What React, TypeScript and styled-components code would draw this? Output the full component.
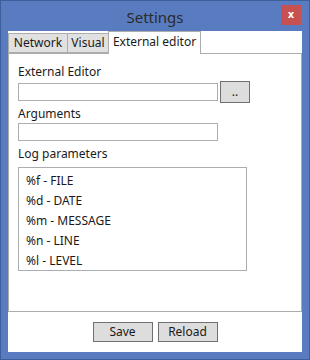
import React from "react";
import styled, { createGlobalStyle } from "styled-components";

const Global = createGlobalStyle`
  html, body { margin: 0; padding: 0; background: #587cbf; }
  body { font-family: "Noto Sans", "Open Sans", sans-serif; }
  * { box-sizing: border-box; }
`;

const Window = styled.div`
  width: 310px;
  height: 360px;
  background: #587cbf;
  border: 1px solid #3d5f9c;
  display: flex;
  flex-direction: column;
  padding: 0 7px 7px 7px;
`;

const TitleBar = styled.div`
  height: 30px;
  display: grid;
  grid-template-columns: 1fr auto 1fr;
  align-items: start;
  margin: 0 -7px;
`;

const Title = styled.div`
  grid-column: 2;
  font-size: 15px;
  line-height: 20px;
  padding-top: 6px;
  color: #2b2b2b;
`;

const CloseCell = styled.div`
  grid-column: 3;
  display: flex;
  justify-content: flex-end;
  padding: 4px 8px 0 0;
`;

const CloseButton = styled.div`
  width: 20px;
  height: 20px;
  background: #c75050;
  color: #fff;
  font-family: "DejaVu Sans", sans-serif;
  font-weight: bold;
  font-size: 10px;
  line-height: 20px;
  text-align: center;
`;

const Client = styled.div`
  flex: 1;
  background: #fff;
  display: flex;
  flex-direction: column;
`;

const TabStrip = styled.div`
  height: 22px;
  display: flex;
  align-items: flex-end;
  position: relative;
  z-index: 1;
`;

const Tab = styled.div<{ $active?: boolean; $w: number }>`
  width: ${(p) => p.$w}px;
  height: ${(p) => (p.$active ? 23 : 20)}px;
  margin-bottom: ${(p) => (p.$active ? -1 : 0)}px;
  background: ${(p) => (p.$active ? "#fff" : "#e1e1e1")};
  border: 1px solid #acacac;
  border-bottom: ${(p) => (p.$active ? "none" : "1px solid #acacac")};
  font-size: 12px;
  line-height: ${(p) => (p.$active ? 20 : 17)}px;
  color: #1a1a1a;
  text-align: center;
  & + & { margin-left: -1px; }
`;

const Panel = styled.div`
  height: 259px;
  border: 1px solid #acacac;
  padding: 10px 9px 0 9px;
  display: flex;
  flex-direction: column;
`;

const Label = styled.div<{ $top?: number }>`
  font-size: 12px;
  line-height: 16px;
  color: #1a1a1a;
  margin-top: ${(p) => p.$top ?? 0}px;
`;

const FieldRow = styled.div`
  display: flex;
  align-items: center;
  gap: 2px;
  margin-top: 1px;
`;

const TextBox = styled.div`
  width: 200px;
  height: 18px;
  border: 1px solid #abadb3;
  background: #fff;
`;

const BrowseButton = styled.div`
  width: 30px;
  height: 22px;
  border: 1px solid #707070;
  background: #dddddd;
  font-size: 12px;
  line-height: 19px;
  text-align: center;
  color: #1a1a1a;
`;

const ListBox = styled.div`
  width: 229px;
  height: 104px;
  margin-top: 5px;
  border: 1px solid #abadb3;
  padding: 3px 0 0 7px;
`;

const ListItem = styled.div`
  height: 20px;
  font-size: 12px;
  line-height: 20px;
  color: #1a1a1a;
`;

const Footer = styled.div`
  flex: 1;
  display: flex;
  justify-content: center;
  align-items: flex-start;
  gap: 5px;
  padding-top: 10px;
`;

const DialogButton = styled.div`
  width: 60px;
  height: 20px;
  border: 1px solid #707070;
  background: #dddddd;
  font-size: 12px;
  line-height: 17px;
  text-align: center;
  color: #1a1a1a;
`;

const items = ["%f - FILE", "%d - DATE", "%m - MESSAGE", "%n - LINE", "%l - LEVEL"];

export default function App() {
  return (
    <>
      <Global />
      <Window>
        <TitleBar>
          <Title>Settings</Title>
          <CloseCell>
            <CloseButton>x</CloseButton>
          </CloseCell>
        </TitleBar>
        <Client>
          <TabStrip>
            <Tab $w={60}>Network</Tab>
            <Tab $w={42}>Visual</Tab>
            <Tab $w={93} $active>
              External editor
            </Tab>
          </TabStrip>
          <Panel>
            <Label>External Editor</Label>
            <FieldRow>
              <TextBox />
              <BrowseButton>..</BrowseButton>
            </FieldRow>
            <Label $top={3}>Arguments</Label>
            <FieldRow>
              <TextBox />
            </FieldRow>
            <Label $top={5}>Log parameters</Label>
            <ListBox>
              {items.map((t) => (
                <ListItem key={t}>{t}</ListItem>
              ))}
            </ListBox>
          </Panel>
          <Footer>
            <DialogButton>Save</DialogButton>
            <DialogButton>Reload</DialogButton>
          </Footer>
        </Client>
      </Window>
    </>
  );
}
